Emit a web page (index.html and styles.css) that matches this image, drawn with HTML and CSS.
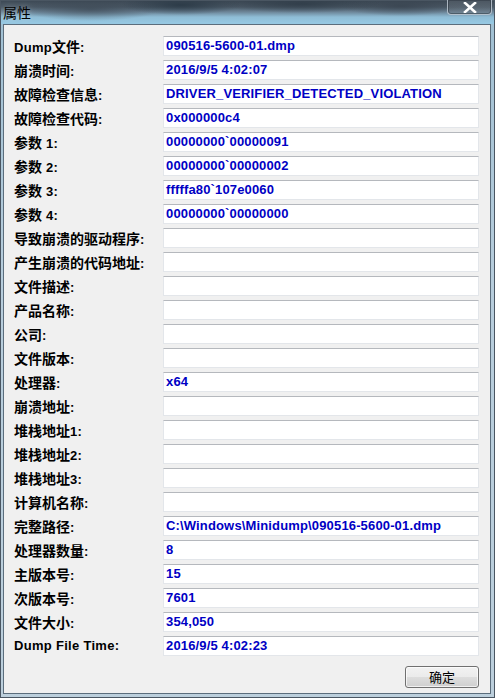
FILE: index.html
```html
<!DOCTYPE html>
<html lang="zh-CN">
<head>
<meta charset="utf-8">
<title>属性</title>
<link rel="stylesheet" href="styles.css">
</head>
<body>
<div class="window">
  <div class="titlebar">
    <span class="title">属性</span>
    <div class="close">
      <svg width="14" height="11" viewBox="0 0 14 11"><path d="M2 1 L12 10 M12 1 L2 10" stroke="#ffffff" stroke-width="2.6" stroke-linecap="square"/></svg>
    </div>
  </div>
  <div class="panel">
    <div class="grid">
      <div class="lbl">Dump<span class="zh">文件</span>:</div><div class="fld">090516-5600-01.dmp</div>
      <div class="lbl"><span class="zh">崩溃时间</span>:</div><div class="fld">2016/9/5 4:02:07</div>
      <div class="lbl"><span class="zh">故障检查信息</span>:</div><div class="fld">DRIVER_VERIFIER_DETECTED_VIOLATION</div>
      <div class="lbl"><span class="zh">故障检查代码</span>:</div><div class="fld">0x000000c4</div>
      <div class="lbl"><span class="zh">参数</span> 1:</div><div class="fld">00000000`00000091</div>
      <div class="lbl"><span class="zh">参数</span> 2:</div><div class="fld">00000000`00000002</div>
      <div class="lbl"><span class="zh">参数</span> 3:</div><div class="fld">fffffa80`107e0060</div>
      <div class="lbl"><span class="zh">参数</span> 4:</div><div class="fld">00000000`00000000</div>
      <div class="lbl"><span class="zh">导致崩溃的驱动程序</span>:</div><div class="fld"></div>
      <div class="lbl"><span class="zh">产生崩溃的代码地址</span>:</div><div class="fld"></div>
      <div class="lbl"><span class="zh">文件描述</span>:</div><div class="fld"></div>
      <div class="lbl"><span class="zh">产品名称</span>:</div><div class="fld"></div>
      <div class="lbl"><span class="zh">公司</span>:</div><div class="fld"></div>
      <div class="lbl"><span class="zh">文件版本</span>:</div><div class="fld"></div>
      <div class="lbl"><span class="zh">处理器</span>:</div><div class="fld">x64</div>
      <div class="lbl"><span class="zh">崩溃地址</span>:</div><div class="fld"></div>
      <div class="lbl"><span class="zh">堆栈地址</span>1:</div><div class="fld"></div>
      <div class="lbl"><span class="zh">堆栈地址</span>2:</div><div class="fld"></div>
      <div class="lbl"><span class="zh">堆栈地址</span>3:</div><div class="fld"></div>
      <div class="lbl"><span class="zh">计算机名称</span>:</div><div class="fld"></div>
      <div class="lbl"><span class="zh">完整路径</span>:</div><div class="fld">C:\Windows\Minidump\090516-5600-01.dmp</div>
      <div class="lbl"><span class="zh">处理器数量</span>:</div><div class="fld">8</div>
      <div class="lbl"><span class="zh">主版本号</span>:</div><div class="fld">15</div>
      <div class="lbl"><span class="zh">次版本号</span>:</div><div class="fld">7601</div>
      <div class="lbl"><span class="zh">文件大小</span>:</div><div class="fld">354,050</div>
      <div class="lbl">Dump File Time:</div><div class="fld">2016/9/5 4:02:23</div>
    </div>
    <div class="actions">
      <button class="btn">确定</button>
    </div>
  </div>
</div>
</body>
</html>
```
FILE: styles.css
```css
html, body {
  margin: 0;
  padding: 0;
  background: #ffffff;
}
.window {
  width: 495px;
  height: 698px;
  box-sizing: border-box;
  display: flex;
  flex-direction: column;
  border: 1px solid #4a5662;
  background: linear-gradient(to bottom, #9fbfd2 0, #b7cddc 40%, #bccfdc 100%);
  padding: 0 3px 3px 2px;
}
.titlebar {
  height: 23px;
  margin: 0 -3px 0 -2px;
  display: flex;
  align-items: flex-start;
  justify-content: space-between;
  background:
    radial-gradient(ellipse 60px 10px at 180px 4px, rgba(40,55,68,0.85), rgba(40,55,68,0) 100%),
    radial-gradient(ellipse 80px 9px at 300px 3px, rgba(45,58,70,0.8), rgba(45,58,70,0) 100%),
    radial-gradient(ellipse 70px 12px at 90px 8px, rgba(60,72,84,0.7), rgba(60,72,84,0) 100%),
    radial-gradient(ellipse 60px 10px at 400px 5px, rgba(55,66,78,0.75), rgba(55,66,78,0) 100%),
    linear-gradient(to bottom, #3e4a56 0, #4c5a67 6px, #6d8699 11px, #8fbdd6 16px, #96c8e2 22px);
}
.title {
  font-family: "Noto Sans CJK SC", sans-serif;
  font-size: 14px;
  line-height: 18px;
  color: #000000;
  padding: 2px 0 0 2px;
  text-shadow: 0 0 6px rgba(255,255,255,0.35);
}
.close {
  width: 45px;
  height: 15px;
  margin-top: -1px;
  margin-right: 2px;
  box-sizing: border-box;
  border: 1px solid rgba(210,220,230,0.7);
  border-top: none;
  border-radius: 0 0 4px 4px;
  background: linear-gradient(to bottom, rgba(90,100,110,0.55), rgba(110,120,130,0.45));
  box-shadow: inset 0 0 0 1px rgba(40,50,60,0.5);
  display: flex;
  align-items: center;
  justify-content: center;
}
.panel {
  flex: 1;
  border: 1px solid #5b6d7c;
  background: #f0f0f0;
  padding: 11px 11px 0 10px;
  display: flex;
  flex-direction: column;
}
.grid {
  display: grid;
  grid-template-columns: 149px 1fr;
  row-gap: 4px;
}
.lbl {
  font-family: "Liberation Sans", "Noto Sans CJK SC", sans-serif;
  font-weight: bold;
  font-size: 13px;
  letter-spacing: 0.3px;
  color: #000000;
  height: 20px;
  line-height: 20px;
  white-space: nowrap;
}
.zh {
  font-family: "Noto Sans CJK SC", sans-serif;
  font-size: 14px;
  letter-spacing: 0;
}
.fld {
  height: 20px;
  box-sizing: border-box;
  background: #ffffff;
  border: 1px solid #e3e6ea;
  border-top-color: #b5b8bd;
  font-family: "Liberation Sans", sans-serif;
  font-weight: bold;
  font-size: 13px;
  letter-spacing: 0.15px;
  line-height: 18px;
  color: #0000c4;
  padding-left: 2px;
  white-space: nowrap;
  overflow: hidden;
}
.actions {
  display: flex;
  justify-content: flex-end;
  padding-top: 10px;
}
.btn {
  width: 74px;
  height: 22px;
  box-sizing: border-box;
  border: 1px solid #707070;
  border-radius: 3px;
  background: linear-gradient(to bottom, #f2f2f2 0, #ebebeb 50%, #dddddd 51%, #cfcfcf 100%);
  box-shadow: inset 0 0 0 1px rgba(255,255,255,0.7);
  font-family: "Noto Sans CJK SC", sans-serif;
  font-size: 13px;
  line-height: 18px;
  color: #000000;
  padding: 0;
}
```
